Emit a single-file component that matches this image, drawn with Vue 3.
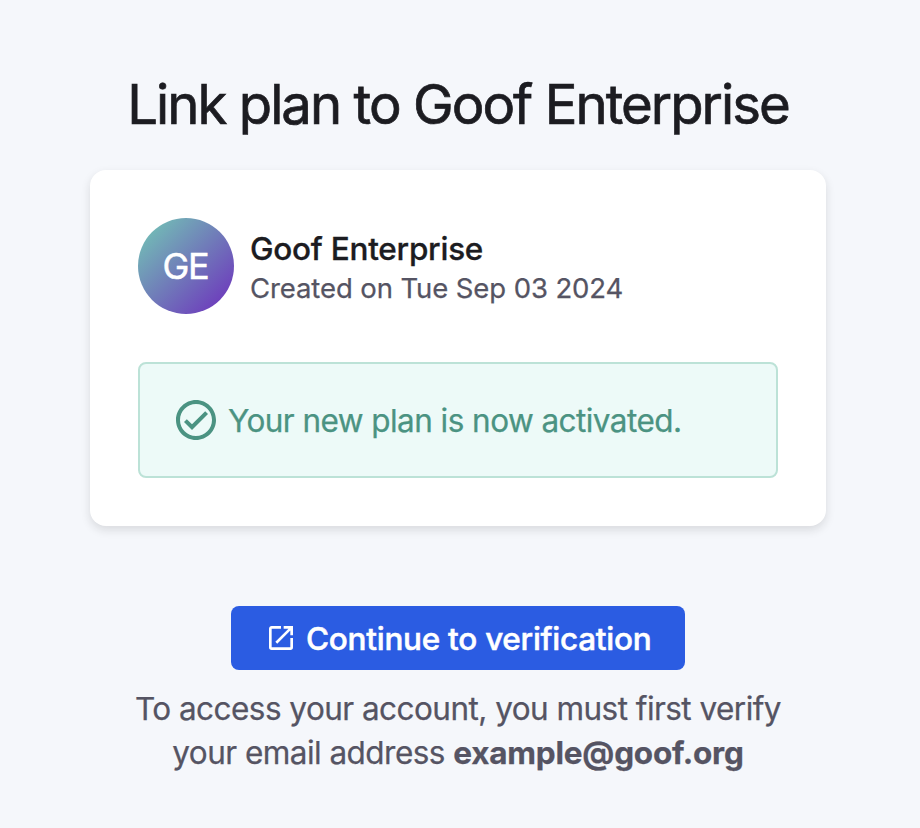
<script setup>
const account = {
  name: 'Goof Enterprise',
  initials: 'GE',
  created: 'Tue Sep 03 2024',
  email: 'example@goof.org',
}
</script>

<template>
  <main class="page">
    <h1 class="title">Link plan to {{ account.name }}</h1>

    <section class="card">
      <header class="account">
        <div class="avatar">{{ account.initials }}</div>
        <div class="details">
          <div class="name">{{ account.name }}</div>
          <div class="created">Created on {{ account.created }}</div>
        </div>
      </header>
      <div class="alert" role="status">
        <svg class="alert-icon" viewBox="0 0 24 24" aria-hidden="true">
          <path d="M12 2C6.5 2 2 6.5 2 12S6.5 22 12 22 22 17.5 22 12 17.5 2 12 2M12 20C7.59 20 4 16.41 4 12S7.59 4 12 4 20 7.59 20 12 16.41 20 12 20M16.59 7.58L10 14.17L7.41 11.59L6 13L10 17L18 9L16.59 7.58Z" />
        </svg>
        <span class="alert-text">Your new plan is now activated.</span>
      </div>
    </section>

    <button class="continue" type="button">
      <svg class="continue-icon" viewBox="0 0 24 24" aria-hidden="true">
        <path d="M14,3V5H17.59L7.76,14.83L9.17,16.24L19,6.41V10H21V3M19,19H5V5H12V3H5C3.89,3 3,3.9 3,5V19A2,2 0 0,0 5,21H19A2,2 0 0,0 21,19V12H19V19Z" />
      </svg>
      <span>Continue to verification</span>
    </button>

    <p class="hint">
      To access your account, you must first verify<br />
      your email address <strong>{{ account.email }}</strong>
    </p>
  </main>
</template>

<style>
body {
  background: #f5f7fb;
}
</style>

<style scoped>
.page {
  box-sizing: border-box;
  width: 916px;
  height: 828px;
  padding-top: 68px;
  display: flex;
  flex-direction: column;
  align-items: center;
  font-family: Inter, "Liberation Sans", sans-serif;
  color: #1c1c21;
}

.title {
  margin: 0 0 30px;
  font-size: 54.5px;
  line-height: 72px;
  font-weight: 400;
  letter-spacing: -1.97px;
  -webkit-text-stroke: 0.7px currentColor;
  white-space: nowrap;
}

.card {
  box-sizing: border-box;
  width: 736px;
  height: 356px;
  padding: 48px;
  border-radius: 16px;
  background: #fff;
  box-shadow: 0 4px 10px rgba(28, 28, 33, 0.13);
}

.account {
  display: flex;
  align-items: center;
  gap: 16px;
  height: 96px;
  margin-bottom: 48px;
}

.avatar {
  box-sizing: border-box;
  display: flex;
  align-items: center;
  justify-content: center;
  width: 96px;
  height: 96px;
  padding-right: 1px;
  border-radius: 50%;
  background: linear-gradient(135deg, #73ccb5 0%, #6d2bbd 100%);
  color: #fff;
  font-size: 36px;
  letter-spacing: -1.2px;
  -webkit-text-stroke: 0.5px currentColor;
}

.details {
  padding-top: 5px;
  white-space: nowrap;
}

.name {
  font-size: 31.5px;
  line-height: 40px;
  font-weight: 500;
  letter-spacing: -0.25px;
  -webkit-text-stroke: 0.3px currentColor;
}

.created {
  font-size: 27.5px;
  line-height: 39px;
  letter-spacing: -0.1px;
  color: #555463;
  -webkit-text-stroke: 0.25px currentColor;
}

.alert {
  box-sizing: border-box;
  display: flex;
  align-items: center;
  gap: 8px;
  height: 116px;
  padding: 0 32px;
  border: 2px solid #bce2d7;
  border-radius: 8px;
  background: #edfaf8;
  color: #4b9382;
  font-size: 31.5px;
  letter-spacing: -0.55px;
  -webkit-text-stroke: 0.25px currentColor;
  white-space: nowrap;
}

.alert-icon {
  width: 48px;
  height: 48px;
  flex: none;
  fill: currentColor;
}

.continue {
  box-sizing: border-box;
  display: flex;
  align-items: center;
  gap: 9px;
  width: 454px;
  height: 64px;
  margin: 80px 0 17px;
  padding: 0 0 0 34px;
  border: 0;
  border-radius: 8px;
  background: #2b5ce2;
  color: #fff;
  font: inherit;
  font-size: 31.5px;
  font-weight: 500;
  letter-spacing: -0.27px;
  -webkit-text-stroke: 0.5px currentColor;
  white-space: nowrap;
}

.continue-icon {
  width: 32px;
  height: 32px;
  flex: none;
  fill: currentColor;
}

.hint {
  margin: 0;
  font-size: 31.5px;
  line-height: 44px;
  letter-spacing: -0.54px;
  text-align: center;
  color: #555463;
  -webkit-text-stroke: 0.25px currentColor;
  white-space: nowrap;
}

.hint strong {
  font-weight: 700;
  letter-spacing: -0.2px;
}
</style>
